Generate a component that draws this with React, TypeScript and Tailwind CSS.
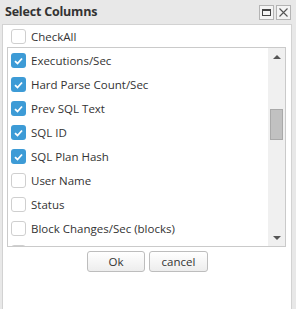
import React from "react";

const columns = [
  { name: "Executions/Sec", checked: true },
  { name: "Hard Parse Count/Sec", checked: true },
  { name: "Prev SQL Text", checked: true },
  { name: "SQL ID", checked: true },
  { name: "SQL Plan Hash", checked: true },
  { name: "User Name", checked: false },
  { name: "Status", checked: false },
  { name: "Block Changes/Sec (blocks)", checked: false },
  { name: "", checked: false },
];

const Box = ({ checked }: { checked: boolean }) =>
  checked ? (
    <span className="flex h-[15px] w-[15px] shrink-0 items-center justify-center rounded-[3px] bg-[#3d9bd6]">
      <svg width="9" height="8" viewBox="0 0 9 8">
        <path d="M1 4.2 L3.5 6.5 L8 1.5" fill="none" stroke="#fff" strokeWidth="1.8" />
      </svg>
    </span>
  ) : (
    <span className="h-[15px] w-[15px] shrink-0 rounded-[3px] border border-[#cfcfcf] bg-white" />
  );

const App = () => {
  return (
    <div
      className="flex h-[309px] w-[296px] flex-col overflow-hidden bg-[#e8e8e8] text-[#333]"
      style={{ fontFamily: '"Open Sans", "Liberation Sans", sans-serif' }}
    >
      <div className="flex h-[24px] shrink-0 items-center justify-between pl-[5px] pr-[5px]">
        <span className="text-[12.5px] font-bold tracking-[-0.2px]">Select Columns</span>
        <div className="flex gap-[2px]">
          <span className="flex h-[15px] w-[15px] items-center justify-center border border-[#b4b4b4] bg-[#f4f4f4]">
            <span className="h-[7px] w-[9px] border border-t-2 border-[#444]" />
          </span>
          <span className="flex h-[15px] w-[15px] items-center justify-center border border-[#b4b4b4] bg-[#f4f4f4]">
            <svg width="9" height="9" viewBox="0 0 9 9">
              <path d="M0.5 0.5 L8.5 8.5 M8.5 0.5 L0.5 8.5" stroke="#555" strokeWidth="1.1" />
            </svg>
          </span>
        </div>
      </div>
      <div className="ml-[2px] mr-[4px] flex flex-1 flex-col border border-b-0 border-[#d2d2d2] bg-white">
        <div className="flex h-[22px] items-center gap-[5px] pl-[8px] pt-[1px] text-[11.5px]">
          <Box checked={false} />
          <span>CheckAll</span>
        </div>
        <div className="ml-[4px] mr-[5px] flex h-[200px] border border-[#cacaca]">
          <div className="flex flex-1 flex-col overflow-hidden pl-[3px] pt-[0.5px] text-[11.5px]">
            {columns.map((c, i) => (
              <div key={i} className="flex h-[24px] shrink-0 items-center gap-[5px] whitespace-nowrap">
                <Box checked={c.checked} />
                {c.name && <span>{c.name}</span>}
              </div>
            ))}
          </div>
          <div className="flex w-[17px] flex-col items-center bg-[#f0f0f0]">
            <div className="flex h-[17px] items-center justify-center">
              <span className="h-0 w-0 border-x-[4px] border-b-[4px] border-x-transparent border-b-[#555]" />
            </div>
            <div className="mt-[44px] h-[31px] w-[13px] border border-[#a9a9a9] bg-[#c1c1c1]" />
            <div className="flex-1" />
            <div className="flex h-[17px] items-center justify-center">
              <span className="h-0 w-0 border-x-[4px] border-t-[4px] border-x-transparent border-t-[#555]" />
            </div>
          </div>
        </div>
        <div className="mt-[4px] flex justify-center gap-[4px] pl-[1px] text-[11.5px]">
          <button className="h-[21px] w-[58px] rounded-[3px] border border-[#bdbdbd] bg-gradient-to-b from-white to-[#ededed]">
            Ok
          </button>
          <button className="h-[21px] w-[59px] rounded-[3px] border border-[#bdbdbd] bg-gradient-to-b from-white to-[#ededed]">
            cancel
          </button>
        </div>
      </div>
    </div>
  );
};

export default App;
